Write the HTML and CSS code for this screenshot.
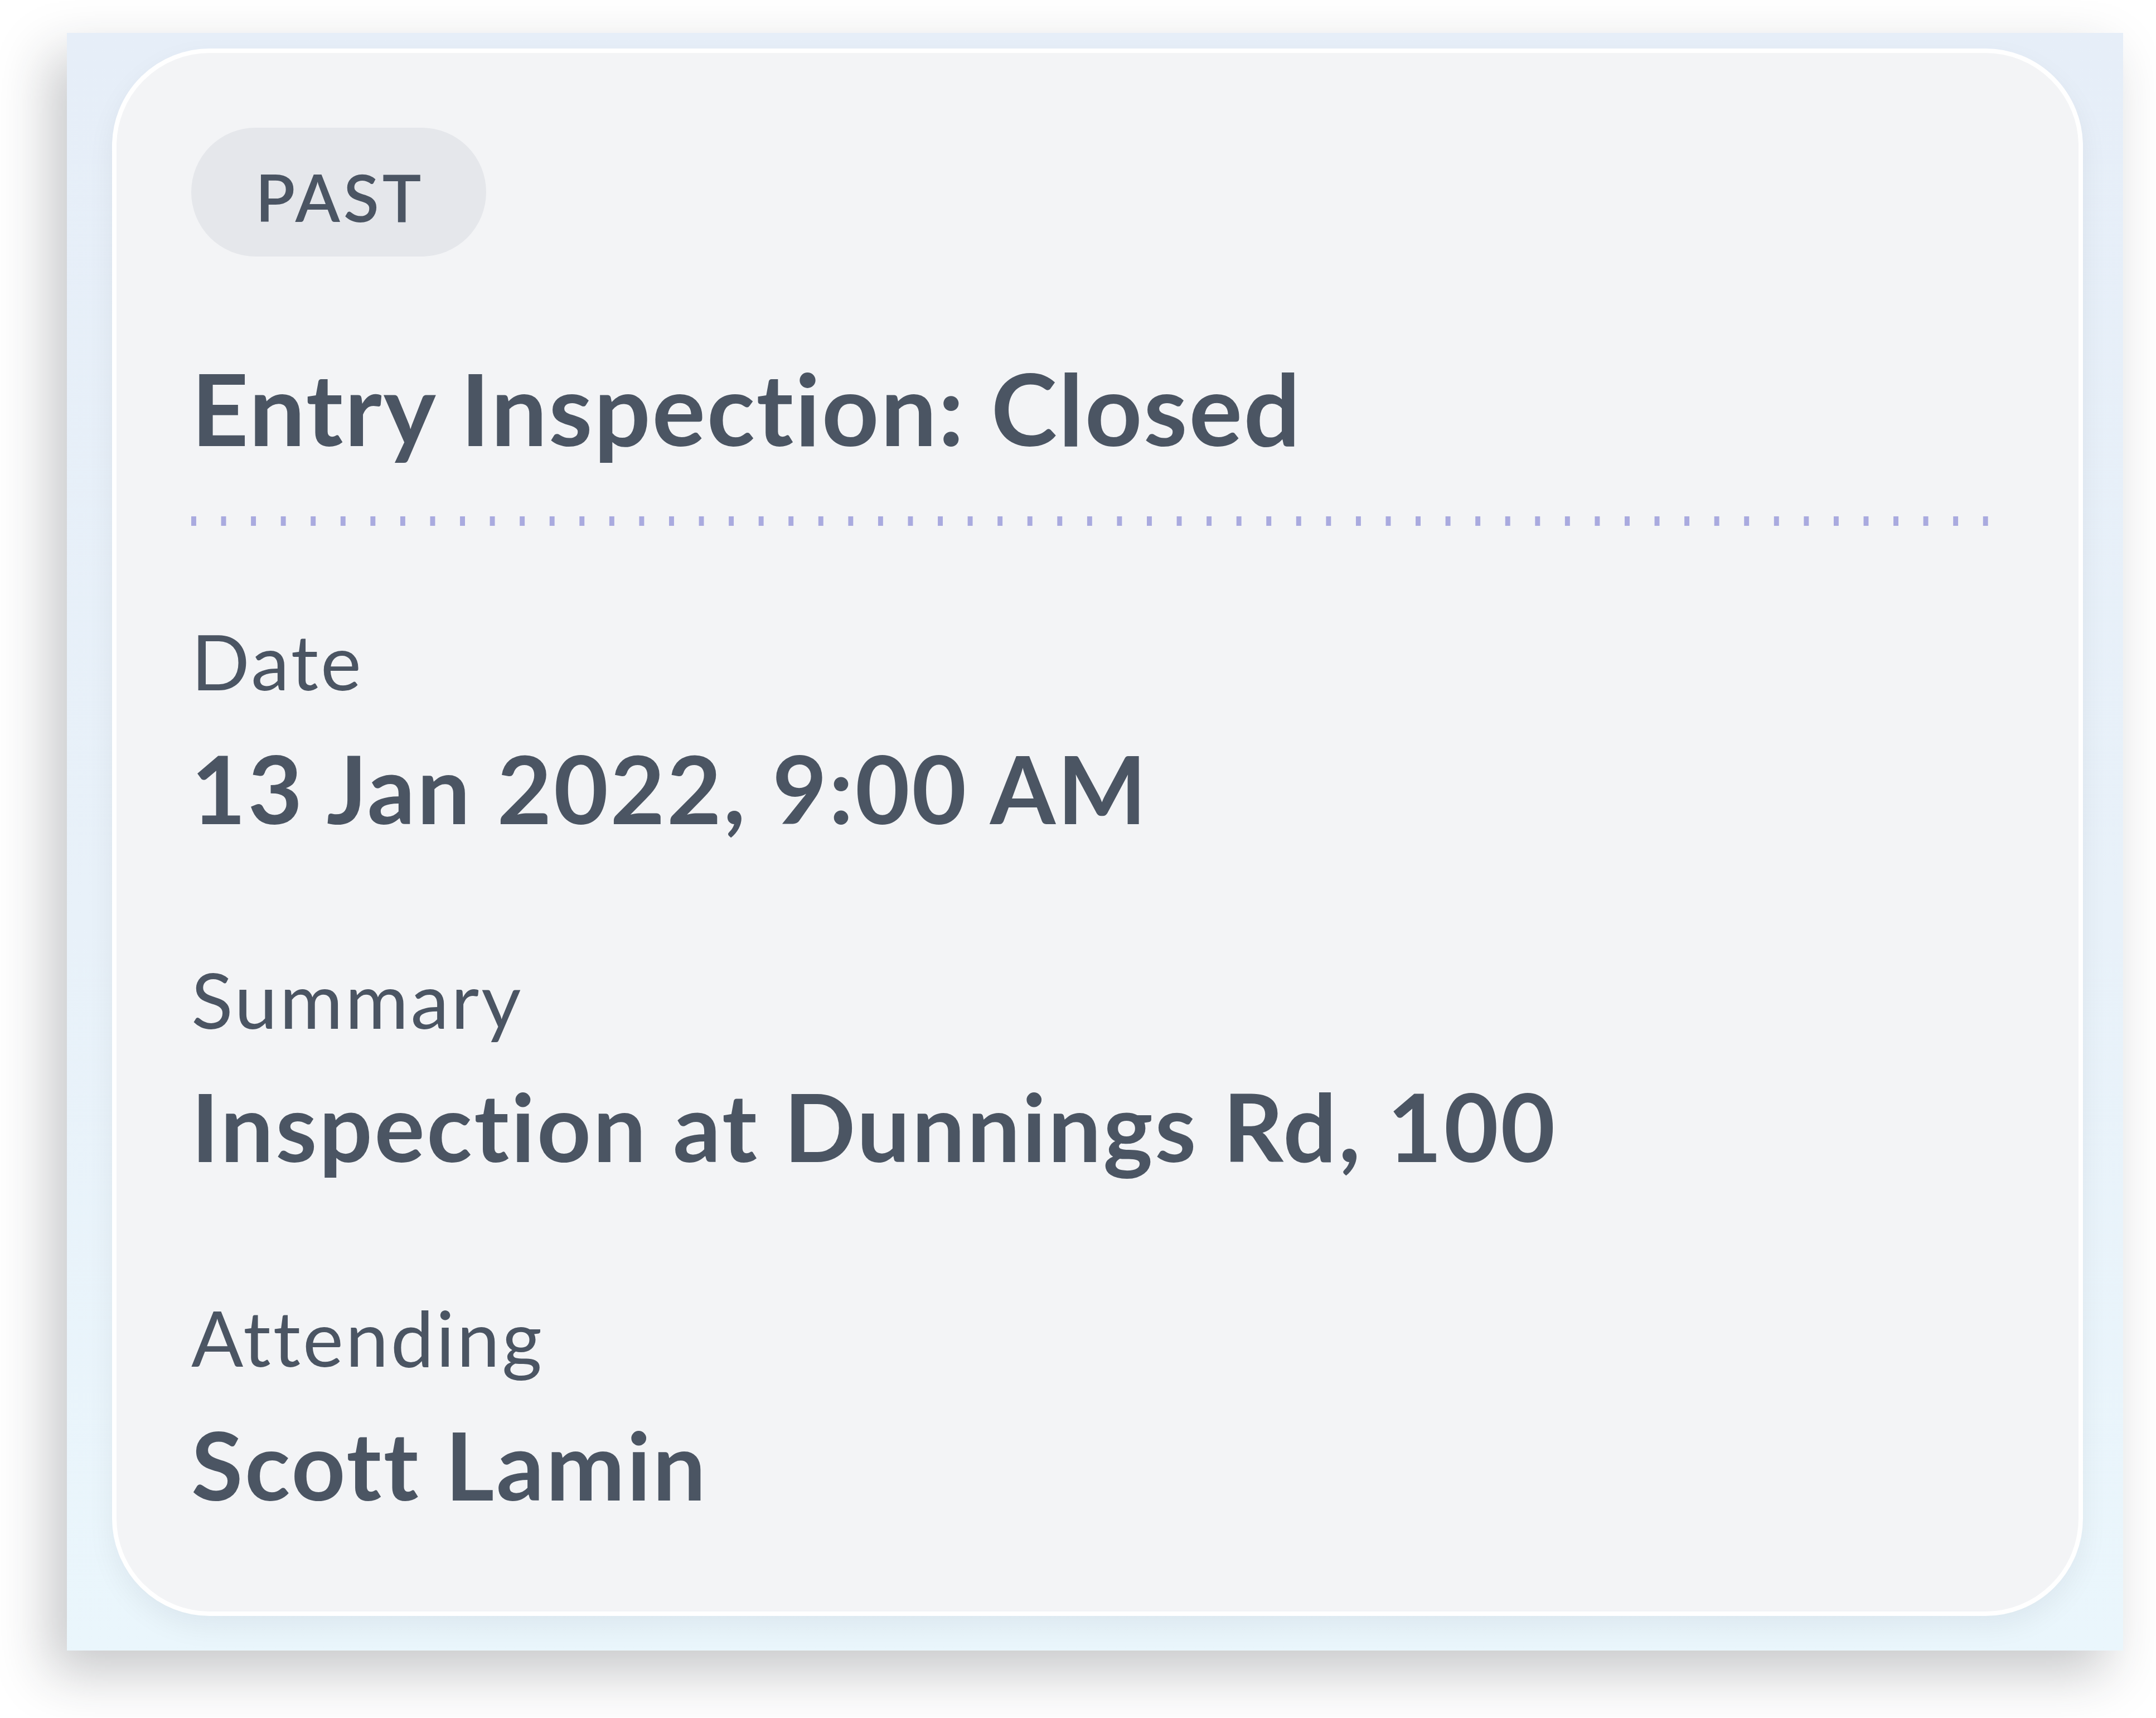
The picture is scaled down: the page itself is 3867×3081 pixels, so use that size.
FILE: index.html
```html
<!DOCTYPE html>
<html lang="en">
<head>
<meta charset="utf-8">
<title>Entry Inspection</title>
<link rel="stylesheet" href="styles.css">
</head>
<body>
  <div class="frame">
    <article class="card">
      <span class="pill">PAST</span>
      <h1 class="title">Entry Inspection: Closed</h1>
      <div class="divider"></div>
      <div class="field">
        <div class="label">Date</div>
        <div class="value">13 Jan 2022, 9:00 AM</div>
      </div>
      <div class="field">
        <div class="label">Summary</div>
        <div class="value">Inspection at Dunnings Rd, 100</div>
      </div>
      <div class="field">
        <div class="label">Attending</div>
        <div class="value">Scott Lamin</div>
      </div>
    </article>
  </div>
</body>
</html>
```
FILE: styles.css
```css
html, body {
  margin: 0;
  padding: 0;
  background: #ffffff;
}

body {
  font-family: "Lato", "Noto Sans", sans-serif;
  color: #4b5563;
  font-variant-ligatures: none;
  font-feature-settings: "liga" 0, "dlig" 0;
}

.frame {
  box-sizing: border-box;
  margin: 59px 59px 120px 120px;
  padding: 28px 72px 62px 81px;
  background: linear-gradient(180deg, #e6eef8 0%, #e8f1f9 55%, #eaf6fc 100%);
  box-shadow: -30px 40px 90px rgba(30, 35, 45, 0.25);
}

.card {
  display: flex;
  flex-direction: column;
  align-items: flex-start;
  border: 8px solid #ffffff;
  border-radius: 175px;
  background: #f3f4f6;
  padding: 134px 134px 163px 134px;
  box-shadow: 0 20px 50px rgba(15, 23, 42, 0.06);
}

.pill {
  display: block;
  padding: 54px 111px 37px 115px;
  border-radius: 999px;
  background: #e5e7eb;
  font-size: 117px;
  font-weight: 600;
  line-height: 1.2;
  letter-spacing: 6px;
}

.title {
  margin: 164px 0 0 0;
  font-size: 179px;
  font-weight: 700;
  line-height: 1.2;
  letter-spacing: 2.6px;
}

.divider {
  align-self: stretch;
  margin-top: 87px;
  height: 17px;
  background-image: linear-gradient(90deg, #a9aadf 0, #a9aadf 9px, transparent 9px);
  background-size: 53.57px 17px;
  background-repeat: repeat-x;
}

.field {
  margin-top: 194px;
}

.divider + .field {
  margin-top: 159px;
}

.label {
  font-size: 138px;
  font-weight: 400;
  line-height: 1.2;
  letter-spacing: 4px;
}

.value {
  margin-top: 44px;
  font-size: 169px;
  font-weight: 700;
  line-height: 1.2;
  letter-spacing: 3.5px;
}
```
